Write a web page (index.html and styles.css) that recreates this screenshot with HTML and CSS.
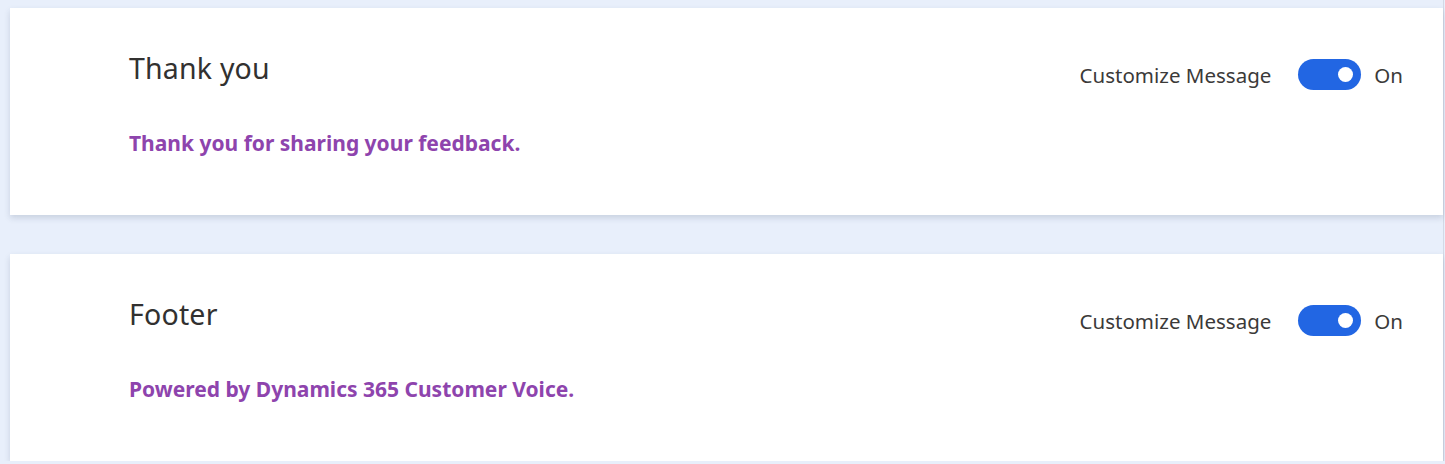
FILE: index.html
```html
<!DOCTYPE html>
<html lang="en">
<head>
<meta charset="utf-8">
<title>Messages</title>
<link rel="stylesheet" href="styles.css">
</head>
<body>
  <main class="page">
    <section class="card">
      <div class="card-head">
        <h2 class="card-title">Thank you</h2>
        <div class="controls">
          <span class="control-label">Customize Message</span>
          <span class="toggle is-on" role="switch" aria-checked="true"><span class="knob"></span></span>
          <span class="toggle-state">On</span>
        </div>
      </div>
      <p class="message">Thank you for sharing your feedback.</p>
    </section>
    <section class="card">
      <div class="card-head">
        <h2 class="card-title">Footer</h2>
        <div class="controls">
          <span class="control-label">Customize Message</span>
          <span class="toggle is-on" role="switch" aria-checked="true"><span class="knob"></span></span>
          <span class="toggle-state">On</span>
        </div>
      </div>
      <p class="message">Powered by Dynamics 365 Customer Voice.</p>
    </section>
  </main>
</body>
</html>
```
FILE: styles.css
```css
html, body {
  margin: 0;
  padding: 0;
}
body {
  background: #e8effb;
  font-family: "Noto Sans", "Open Sans", sans-serif;
  color: #333333;
  overflow: hidden;
}
.page {
  display: flex;
  flex-direction: column;
  gap: 39px;
  padding: 8px 0 0 10px;
  border-right: 1px solid #d3d9e6;
  margin-right: 1px;
}
.card {
  background: #ffffff;
  height: 207px;
  box-sizing: border-box;
  padding: 42px 40px 0 119px;
  box-shadow: 0 3px 6px rgba(40, 55, 90, 0.16);
}
.card-head {
  display: flex;
  align-items: flex-start;
  justify-content: space-between;
}
.card-title {
  margin: 0;
  font-size: 28.5px;
  line-height: 36px;
  font-weight: 400;
  letter-spacing: 0.2px;
  color: #323130;
}
.controls {
  display: flex;
  align-items: center;
  margin-top: 9px;
  height: 31px;
}
.control-label {
  font-size: 20.5px;
  color: #3b3a39;
  margin-right: 27px;
}
.toggle {
  width: 63px;
  height: 31px;
  border-radius: 16px;
  background: #2266e3;
  display: flex;
  align-items: center;
  justify-content: flex-end;
  padding-right: 8px;
  box-sizing: border-box;
}
.knob {
  width: 15px;
  height: 15px;
  border-radius: 50%;
  background: #ffffff;
}
.toggle-state {
  font-size: 20.5px;
  color: #3b3a39;
  margin-left: 13px;
}
.message {
  margin: 39px 0 0;
  font-size: 21px;
  line-height: 28px;
  font-weight: 700;
  color: #8e44ad;
}
```
